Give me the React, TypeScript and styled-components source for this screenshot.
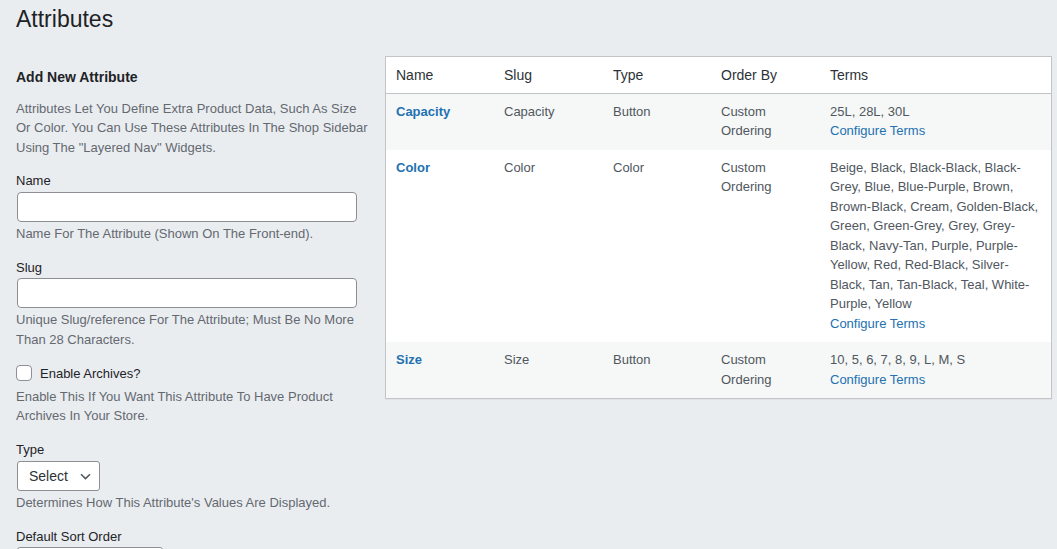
import React from "react";
import styled, { createGlobalStyle } from "styled-components";

const GlobalStyle = createGlobalStyle`
  html, body {
    margin: 0;
    padding: 0;
    background: #eaedf0;
    overflow: hidden;
  }
  body {
    font-family: "Liberation Sans", Arial, sans-serif;
    font-size: 13px;
    color: #3c434a;
  }
  * { box-sizing: border-box; }
`;

const Page = styled.div`
  padding: 0 5px 40px 16px;
`;

const Title = styled.h1`
  margin: 0;
  padding-top: 5px;
  font-size: 23px;
  font-weight: 400;
  line-height: 29.9px;
  color: #1d2327;
`;

const Columns = styled.div`
  display: grid;
  grid-template-columns: 358px 1fr;
  column-gap: 11px;
  align-items: start;
  margin-top: 21px;
`;

const FormCol = styled.div`
  display: flex;
  flex-direction: column;
`;

const SectionTitle = styled.h2`
  margin: 12px 0 0;
  font-size: 14px;
  font-weight: 700;
  line-height: 19.6px;
  color: #1d2327;
`;

const Intro = styled.p`
  margin: 11px 0 0;
  line-height: 19.5px;
  color: #646970;
`;

const Fields = styled.div`
  display: flex;
  flex-direction: column;
  gap: 13.5px;
  margin-top: 13px;
`;

const Field = styled.div`
  display: flex;
  flex-direction: column;
  align-items: flex-start;
`;

const Label = styled.label`
  display: block;
  line-height: 19.5px;
  padding-top: 1px;
  margin-bottom: 1px;
  color: #1d2327;
`;

const TextInput = styled.input`
  width: 95%;
  height: 30px;
  margin: 0 1px;
  padding: 0 8px;
  border: 1px solid #8c8f94;
  border-radius: 4px;
  background: #fff;
  font: inherit;
  font-size: 14px;
  color: #2c3338;
`;

const Description = styled.p<{ $gap?: number }>`
  margin: ${(p) => p.$gap ?? 1}px 0 0;
  padding-top: 1px;
  line-height: 19.5px;
  color: #646970;
`;

const CheckRow = styled.label`
  display: flex;
  align-items: center;
  line-height: 19.5px;
  padding-top: 1px;
  color: #1d2327;
`;

const Checkbox = styled.input`
  appearance: none;
  width: 16px;
  height: 16px;
  margin: 0 8px 0 0;
  border: 1px solid #8c8f94;
  border-radius: 4px;
  background: #fff;
`;

const SelectWrap = styled.div`
  position: relative;
  display: inline-block;
  margin: 0 1px;
`;

const Select = styled.select<{ $w: number }>`
  appearance: none;
  width: ${(p) => p.$w}px;
  height: 30px;
  padding: 0 24px 0 11px;
  border: 1px solid #8c8f94;
  border-radius: 3px;
  background: #fff;
  font-family: inherit;
  font-size: 14px;
  color: #2c3338;
`;

const Chevron = styled.svg`
  position: absolute;
  right: 9px;
  top: 12px;
  width: 11px;
  height: 7px;
  pointer-events: none;
`;

const Table = styled.table`
  width: 100%;
  table-layout: fixed;
  border-collapse: separate;
  border-spacing: 0;
  border: 1px solid #c3c4c7;
  background: #fff;
  box-shadow: 0 1px 1px rgba(0, 0, 0, 0.04);
`;

const HeadCell = styled.th<{ $w?: number }>`
  ${(p) => (p.$w ? `width: ${p.$w}px;` : "")}
  padding: 9px 10px 7px;
  text-align: left;
  font-size: 14px;
  font-weight: 400;
  line-height: 19.6px;
  color: #2c3338;
  border-bottom: 1px solid #c3c4c7;
`;

const Row = styled.tr<{ $alt: boolean }>`
  background: ${(p) => (p.$alt ? "#f6f7f7" : "#fff")};
`;

const Cell = styled.td`
  padding: 8px 10px 9px;
  vertical-align: top;
  line-height: 19.5px;
  color: #50575e;
`;

const RowTitle = styled.a`
  font-weight: 700;
  color: #2271b1;
  text-decoration: none;
`;

const TermsLink = styled.a`
  display: block;
  color: #2271b1;
  text-decoration: none;
`;

const ChevronIcon = () => (
  <Chevron viewBox="0 0 11 7" fill="none">
    <path d="M1 1.2 L5.5 5.6 L10 1.2" stroke="#50575e" strokeWidth="1.5" />
  </Chevron>
);

type Attr = { name: string; slug: string; type: string; order: string; terms: string };

const attributes: Attr[] = [
  { name: "Capacity", slug: "Capacity", type: "Button", order: "Custom Ordering", terms: "25L, 28L, 30L" },
  {
    name: "Color",
    slug: "Color",
    type: "Color",
    order: "Custom Ordering",
    terms:
      "Beige, Black, Black-Black, Black-Grey, Blue, Blue-Purple, Brown, Brown-Black, Cream, Golden-Black, Green, Green-Grey, Grey, Grey-Black, Navy-Tan, Purple, Purple-Yellow, Red, Red-Black, Silver-Black, Tan, Tan-Black, Teal, White-Purple, Yellow",
  },
  { name: "Size", slug: "Size", type: "Button", order: "Custom Ordering", terms: "10, 5, 6, 7, 8, 9, L, M, S" },
];

export default function App() {
  return (
    <Page>
      <GlobalStyle />
      <Title>Attributes</Title>
      <Columns>
        <FormCol>
          <SectionTitle>Add New Attribute</SectionTitle>
          <Intro>
            Attributes Let You Define Extra Product Data, Such As Size Or Color. You Can Use These
            Attributes In The Shop Sidebar Using The "Layered Nav" Widgets.
          </Intro>
          <Fields>
            <Field>
              <Label htmlFor="attr-name">Name</Label>
              <TextInput id="attr-name" type="text" />
              <Description>Name For The Attribute (Shown On The Front-end).</Description>
            </Field>
            <Field>
              <Label htmlFor="attr-slug">Slug</Label>
              <TextInput id="attr-slug" type="text" />
              <Description>
                Unique Slug/reference For The Attribute; Must Be No More Than 28 Characters.
              </Description>
            </Field>
            <Field>
              <CheckRow>
                <Checkbox type="checkbox" />
                Enable Archives?
              </CheckRow>
              <Description $gap={2.5}>
                Enable This If You Want This Attribute To Have Product Archives In Your Store.
              </Description>
            </Field>
            <Field>
              <Label htmlFor="attr-type">Type</Label>
              <SelectWrap>
                <Select id="attr-type" $w={83} defaultValue="select">
                  <option value="select">Select</option>
                  <option value="button">Button</option>
                  <option value="color">Color</option>
                </Select>
                <ChevronIcon />
              </SelectWrap>
              <Description>Determines How This Attribute's Values Are Displayed.</Description>
            </Field>
            <Field>
              <Label htmlFor="attr-order">Default Sort Order</Label>
              <SelectWrap>
                <Select id="attr-order" $w={146} defaultValue="menu_order">
                  <option value="menu_order">Custom Ordering</option>
                  <option value="name">Name</option>
                </Select>
                <ChevronIcon />
              </SelectWrap>
            </Field>
          </Fields>
        </FormCol>
        <Table>
          <thead>
            <tr>
              <HeadCell $w={108}>Name</HeadCell>
              <HeadCell $w={109}>Slug</HeadCell>
              <HeadCell $w={108}>Type</HeadCell>
              <HeadCell $w={109}>Order By</HeadCell>
              <HeadCell>Terms</HeadCell>
            </tr>
          </thead>
          <tbody>
            {attributes.map((a, i) => (
              <Row key={a.slug} $alt={i % 2 === 0}>
                <Cell>
                  <RowTitle href="#">{a.name}</RowTitle>
                </Cell>
                <Cell>{a.slug}</Cell>
                <Cell>{a.type}</Cell>
                <Cell>{a.order}</Cell>
                <Cell>
                  {a.terms}
                  <TermsLink href="#">Configure Terms</TermsLink>
                </Cell>
              </Row>
            ))}
          </tbody>
        </Table>
      </Columns>
    </Page>
  );
}
